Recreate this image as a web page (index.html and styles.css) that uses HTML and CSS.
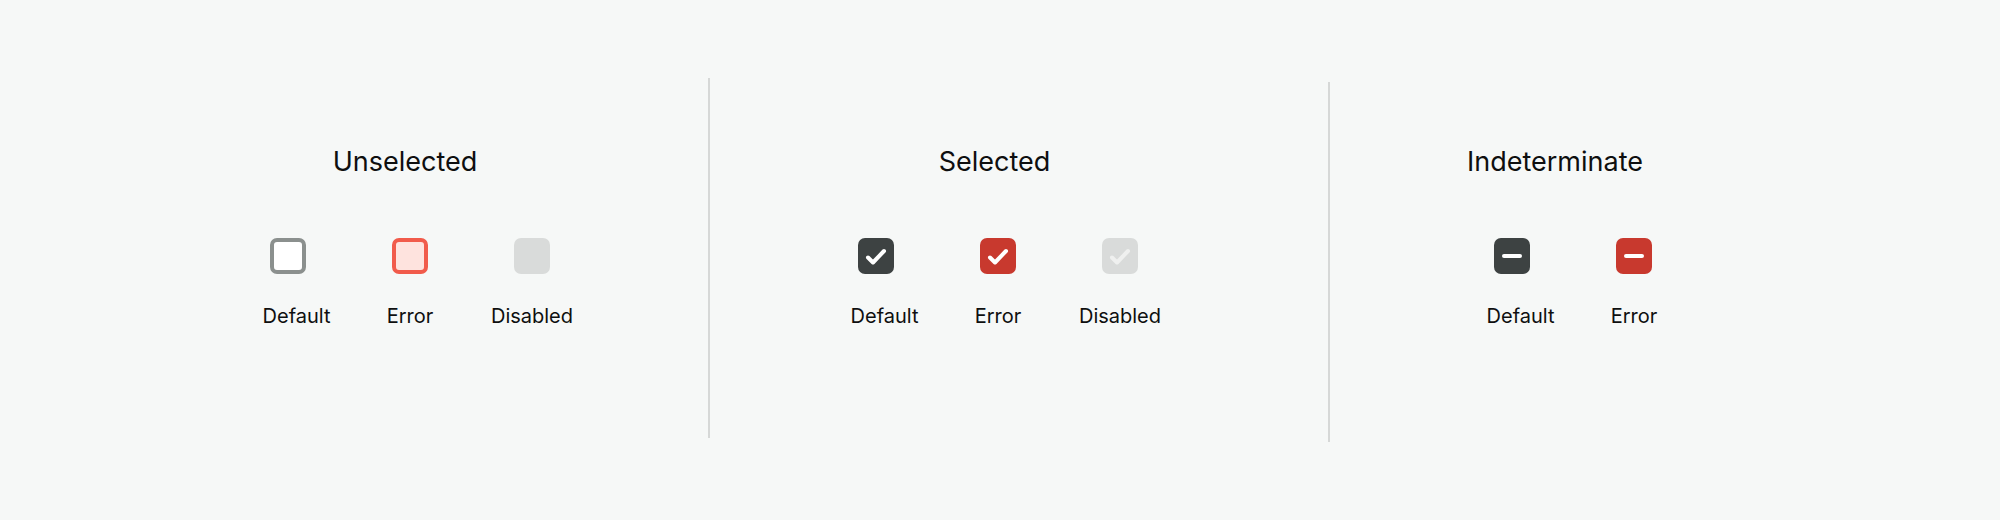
FILE: index.html
```html
<!DOCTYPE html>
<html lang="en">
<head>
<meta charset="utf-8">
<title>Checkbox states</title>
<link rel="stylesheet" href="styles.css">
</head>
<body>
<main class="board">
  <section class="group group-unselected">
    <h2 class="group-title">Unselected</h2>
    <div class="items cols-3">
      <div class="item">
        <span class="box box-off"></span>
        <span class="label label-default">Default</span>
      </div>
      <div class="item">
        <span class="box box-off-error"></span>
        <span class="label">Error</span>
      </div>
      <div class="item">
        <span class="box box-off-disabled"></span>
        <span class="label">Disabled</span>
      </div>
    </div>
  </section>

  <div class="divider divider-first"></div>

  <section class="group group-selected">
    <h2 class="group-title">Selected</h2>
    <div class="items cols-3">
      <div class="item">
        <span class="box box-on">
          <svg class="mark" viewBox="0 0 36 36"><polyline points="10,19.5 15,24.5 26,13"/></svg>
        </span>
        <span class="label label-default">Default</span>
      </div>
      <div class="item">
        <span class="box box-on-error">
          <svg class="mark" viewBox="0 0 36 36"><polyline points="10,19.5 15,24.5 26,13"/></svg>
        </span>
        <span class="label">Error</span>
      </div>
      <div class="item">
        <span class="box box-on-disabled">
          <svg class="mark mark-disabled" viewBox="0 0 36 36"><polyline points="10,19.5 15,24.5 26,13"/></svg>
        </span>
        <span class="label">Disabled</span>
      </div>
    </div>
  </section>

  <div class="divider divider-second"></div>

  <section class="group group-indeterminate">
    <h2 class="group-title">Indeterminate</h2>
    <div class="items cols-2">
      <div class="item">
        <span class="box box-on"><span class="dash"></span></span>
        <span class="label label-default">Default</span>
      </div>
      <div class="item">
        <span class="box box-on-error"><span class="dash"></span></span>
        <span class="label">Error</span>
      </div>
    </div>
  </section>
</main>
</body>
</html>
```

FILE: styles.css
```css
* { box-sizing: border-box; }

html, body {
  margin: 0;
  padding: 0;
}

body {
  width: 2000px;
  height: 520px;
  background: #f6f8f7;
  font-family: "Inter", "Noto Sans", sans-serif;
  color: #111;
  overflow: hidden;
}

.board {
  display: flex;
  align-items: flex-start;
  height: 520px;
}

.group {
  display: flex;
  flex-direction: column;
  align-items: center;
  padding-top: 145px;
}

.group-unselected { width: 708px; padding-left: 112px; }
.group-selected { width: 618px; padding-right: 42px; }
.group-indeterminate { width: 670px; padding-right: 184px; }

.group-title {
  margin: 0;
  font-size: 27px;
  line-height: 34px;
  font-weight: 400;
  color: #0e0f0f;
}

.group-unselected .group-title { margin-right: 10px; }
.group-selected .group-title { margin-right: 7px; }
.group-indeterminate .group-title { margin-right: 36px; }

.divider {
  width: 2px;
  height: 360px;
  background: #d6d8d7;
  flex: none;
}
.divider-first { margin-top: 78px; }
.divider-second { margin-top: 82px; }

.items {
  display: grid;
  margin-top: 59px;
}
.cols-3 { grid-template-columns: repeat(3, 122px); }
.cols-2 { grid-template-columns: repeat(2, 122px); }

.item {
  display: flex;
  flex-direction: column;
  align-items: center;
}

.box {
  width: 36px;
  height: 36px;
  border-radius: 7px;
  display: flex;
  align-items: center;
  justify-content: center;
}

.box-off {
  background: #ffffff;
  border: 4px solid #8b908e;
}
.box-off-error {
  background: #fee3de;
  border: 4px solid #f15b4b;
}
.box-off-disabled { background: #d9dbda; }
.box-on { background: #3d4242; }
.box-on-error { background: #c8392e; }
.box-on-disabled { background: #d9dbda; }

.mark {
  width: 36px;
  height: 36px;
  display: block;
}
.mark polyline {
  fill: none;
  stroke: #ffffff;
  stroke-width: 4;
  stroke-linecap: round;
  stroke-linejoin: round;
}
.mark-disabled polyline { stroke: #eff0ef; }

.dash {
  width: 20px;
  height: 4px;
  border-radius: 2px;
  background: #ffffff;
}

.label {
  margin-top: 30px;
  font-size: 20px;
  line-height: 24px;
  color: #0e0f0f;
  white-space: nowrap;
}
.label-default { padding-left: 17px; }
```
